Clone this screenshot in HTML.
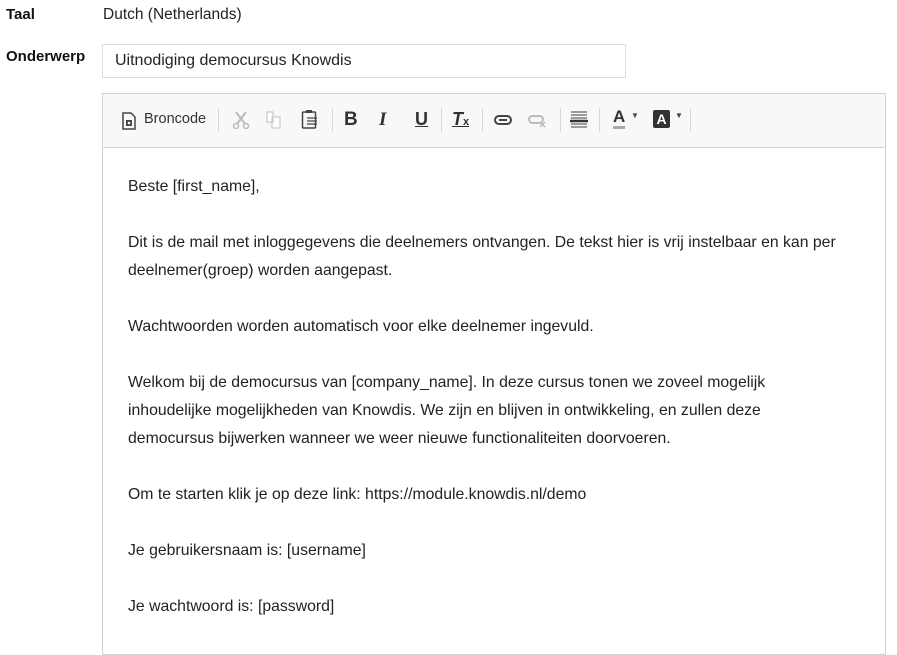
<!DOCTYPE html>
<html><head><meta charset="utf-8"><style>
body{margin:0;width:897px;height:628px;overflow:hidden;background:#fff;font-family:"Liberation Sans",sans-serif;color:#222;position:relative}
.a{position:absolute}
.lbl{font-weight:bold;font-size:15px;color:#111}
.ed{left:102px;top:93px;width:782px;height:560px;border:1px solid #d1d1d1}
.tb{position:absolute;left:0;top:0;right:0;height:53px;background:#f8f8f8;border-bottom:1px solid #d1d1d1}
.sep{position:absolute;top:14px;width:1px;height:24px;background:#d8d8d8}
.ic{position:absolute;top:15px}
.ct{position:absolute;left:25px;top:79px;font-size:15.8px;line-height:28px;color:#222;white-space:nowrap}
.ct p{margin:0 0 28px}
</style></head><body>
<div class="a lbl" style="left:6px;top:6px">Taal</div>
<div class="a" style="left:103px;top:6px;font-size:15.5px">Dutch (Netherlands)</div>
<div class="a lbl" style="left:6px;top:48px">Onderwerp</div>
<div class="a" style="left:102px;top:44px;width:522px;height:32px;border:1px solid #ddd;font-size:16px;line-height:32px;text-indent:12px">Uitnodiging democursus Knowdis</div>
<div class="a ed">
 <div class="tb">
  <svg class="ic" style="left:19px;top:18px" width="14" height="18" viewBox="0 0 14 18"><path d="M1 1h8l4 4v12H1z" fill="none" stroke="#444" stroke-width="1.5"/><rect x="4" y="8" width="6" height="6" fill="#444"/><circle cx="7" cy="11" r="1.3" fill="#fff"/></svg>
  <div class="a" style="left:41px;top:17px;font-size:14.5px;color:#333">Broncode</div>
  <div class="sep" style="left:115px"></div>
  <svg class="ic" style="left:129px;top:17px" width="18" height="18" viewBox="0 0 18 18"><path d="M4 1l9 12M14 1L5 13" stroke="#bbb" stroke-width="2"/><circle cx="4" cy="15" r="2.5" fill="none" stroke="#bbb" stroke-width="1.5"/><circle cx="14" cy="15" r="2.5" fill="none" stroke="#bbb" stroke-width="1.5"/></svg>
  <svg class="ic" style="left:163px;top:17px" width="16" height="18" viewBox="0 0 16 18"><path d="M1 1h6v10H1zM6 6h8v11H6z" fill="#fff" stroke="#ccc" stroke-width="1.3"/></svg>
  <svg class="ic" style="left:198px;top:15px" width="18" height="20" viewBox="0 0 18 20"><rect x="1.5" y="3" width="13" height="16" rx="1" fill="none" stroke="#444" stroke-width="1.5"/><rect x="5" y="1" width="6" height="3" fill="#444"/><path d="M6 9h10M6 12h10M6 15h10" stroke="#444" stroke-width="1.3"/></svg>
  <div class="sep" style="left:229px"></div>
  <div class="a" style="left:241px;top:15px;font-weight:bold;font-size:19px;color:#333">B</div>
  <div class="a" style="left:276px;top:15px;font-weight:bold;font-style:italic;font-size:19px;color:#333;font-family:'Liberation Serif',serif">I</div>
  <div class="a" style="left:312px;top:15px;font-weight:bold;font-size:18px;color:#333;text-decoration:underline">U</div>
  <div class="sep" style="left:338px"></div>
  <div class="a" style="left:349px;top:15px;font-weight:bold;font-style:italic;font-size:18px;color:#333;text-decoration:underline">T<span style="font-size:11px;font-style:normal;text-decoration:none">x</span></div>
  <div class="sep" style="left:379px"></div>
  <svg class="ic" style="left:391px;top:20px" width="18" height="12" viewBox="0 0 18 12"><rect x="1" y="2" width="16" height="8" rx="4" fill="none" stroke="#444" stroke-width="2"/><path d="M5 6h8" stroke="#444" stroke-width="2"/></svg>
  <svg class="ic" style="left:425px;top:20px" width="18" height="14" viewBox="0 0 18 14"><rect x="1" y="2" width="14" height="7" rx="3.5" fill="none" stroke="#bbb" stroke-width="2"/><path d="M12 8l5 5M17 8l-5 5" stroke="#bbb" stroke-width="1.5"/></svg>
  <div class="sep" style="left:457px"></div>
  <svg class="ic" style="left:467px;top:16px" width="18" height="20" viewBox="0 0 18 20"><path d="M1 2h16M1 5h16M1 8h16M1 14h16M1 17h16" stroke="#666" stroke-width="1.2"/><path d="M0 11h18" stroke="#333" stroke-width="2.5"/></svg>
  <div class="sep" style="left:496px"></div>
  <div class="a" style="left:510px;top:14px;font-weight:bold;font-size:17px;color:#333;border-bottom:3px solid #aaa;line-height:18px">A</div>
  <div class="a" style="left:528px;top:17px;font-size:8px;color:#444">▼</div>
  <div class="a" style="left:550px;top:16px;width:17px;height:18px;background:#333;color:#fff;font-weight:bold;font-size:14px;text-align:center;line-height:18px;border-radius:2px">A</div>
  <div class="a" style="left:572px;top:17px;font-size:8px;color:#444">▼</div>
  <div class="sep" style="left:587px"></div>
 </div>
 <div class="ct">
  <p>Beste [first_name],</p>
  <p>Dit is de mail met inloggegevens die deelnemers ontvangen. De tekst hier is vrij instelbaar en kan per<br>deelnemer(groep) worden aangepast.</p>
  <p>Wachtwoorden worden automatisch voor elke deelnemer ingevuld.</p>
  <p>Welkom bij de democursus van [company_name]. In deze cursus tonen we zoveel mogelijk<br>inhoudelijke mogelijkheden van Knowdis. We zijn en blijven in ontwikkeling, en zullen deze<br>democursus bijwerken wanneer we weer nieuwe functionaliteiten doorvoeren.</p>
  <p>Om te starten klik je op deze link: https://module.knowdis.nl/demo</p>
  <p>Je gebruikersnaam is: [username]</p>
  <p>Je wachtwoord is: [password]</p>
 </div>
</div>
</body></html>
